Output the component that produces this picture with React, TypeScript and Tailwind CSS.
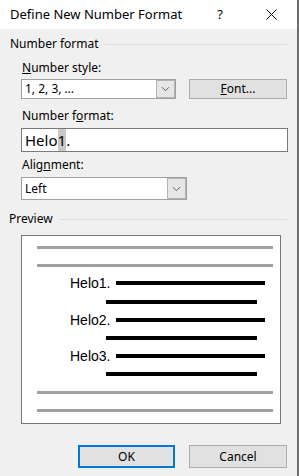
import React from 'react';

const ui = { fontFamily: '"Noto Sans", "Open Sans", Arial, sans-serif' };
const arial = { fontFamily: '"Liberation Sans", Arial, sans-serif' };

const Chevron: React.FC = () => (
  <svg width="9" height="6" viewBox="0 0 9 6" fill="none">
    <path d="M1 1.2 L4.5 4.7 L8 1.2" stroke="#606060" strokeWidth="1" />
  </svg>
);

const Dropdown: React.FC<{ value: string; width: string; height: string }> = ({ value, width, height }) => (
  <div className={`flex ${width} ${height} border border-[#a0a0a0] bg-white`}>
    <div className="flex flex-1 items-center pl-[3px] text-[12px] text-black">{value}</div>
    <div className="flex w-[19px] items-center justify-center border border-[#b4b4b4] bg-[#e6e6e6]">
      <Chevron />
    </div>
  </div>
);

const GroupHeader: React.FC<{ label: string }> = ({ label }) => (
  <div className="flex h-[16px] items-center pl-[10px] pr-[10px]">
    <span className="text-[12px] text-black">{label}</span>
    <div className="ml-[6px] h-px flex-1 bg-[#dcdcdc]" />
  </div>
);

const Label: React.FC<{ children: React.ReactNode; mt: string }> = ({ children, mt }) => (
  <div className={`flex h-[16px] items-center pl-[22px] text-[12px] text-black ${mt}`}>{children}</div>
);

const Button: React.FC<{ children: React.ReactNode; primary?: boolean }> = ({ children, primary }) => (
  <div
    className={`flex h-[23px] w-[98px] items-center justify-center bg-[#e1e1e1] text-[12px] text-black ${
      primary ? 'border-2 border-[#0078d7]' : 'border border-[#adadad]'
    }`}
  >
    {children}
  </div>
);

const GrayLine: React.FC = () => (
  <div className="flex h-[18.2px] items-center pl-[15px]">
    <div className="h-[3px] w-[236px] bg-[#a0a0a0]" />
  </div>
);

const HeloRows: React.FC<{ n: number }> = ({ n }) => (
  <>
    <div className="flex h-[18.2px] items-center">
      <span className="ml-[48px] w-[46px] text-[14px] leading-none text-black" style={arial}>
        Helo{n}.
      </span>
      <div className="h-[4px] w-[149px] bg-black" />
    </div>
    <div className="flex h-[18.2px] items-center">
      <div className="ml-[84px] h-[4px] w-[151px] bg-black" />
    </div>
  </>
);

export default function App() {
  return (
    <div className="flex h-[476px] w-[299px] overflow-hidden bg-[#6e6e6e]" style={ui}>
      <div className="flex w-[297px] flex-col bg-[#f0f0f0]">
        <div className="flex h-[29px] items-center bg-white">
          <span className="pl-[10px] text-[13px] text-black">Define New Number Format</span>
          <span className="ml-auto mr-[43px] text-[13px] text-black">?</span>
          <svg className="mr-[20px]" width="11" height="11" viewBox="0 0 11 11">
            <path d="M0.5 0.5 L10.5 10.5 M10.5 0.5 L0.5 10.5" stroke="#000" strokeWidth="1" />
          </svg>
        </div>

        <div className="mt-[7px]">
          <GroupHeader label="Number format" />
        </div>

        <Label mt="mt-[8px]">
          <span className="underline">N</span>umber style:
        </Label>
        <div className="mt-[3px] flex pl-[21px]">
          <Dropdown value="1, 2, 3, …" width="w-[155px]" height="h-[20px]" />
          <div className="ml-[13px] h-[20px]">
            <div className="flex h-[20px] w-[98px] items-center justify-center border border-[#adadad] bg-[#e1e1e1] text-[12px] text-black">
              <span className="underline">F</span>ont...
            </div>
          </div>
        </div>

        <Label mt="mt-[9px]">
          Number f<span className="underline">o</span>rmat:
        </Label>
        <div className="mt-[4px] pl-[21px]">
          <div className="flex h-[24px] w-[267px] items-center border border-[#7a7a7a] bg-white pl-[3px] text-[15px] text-black">
            Helo<span className="bg-[#c8c8c8]">1</span>.
          </div>
        </div>

        <Label mt="mt-[5px]">
          Alig<span className="underline">n</span>ment:
        </Label>
        <div className="mt-[4px] pl-[21px]">
          <Dropdown value="Left" width="w-[166px]" height="h-[23px]" />
        </div>

        <div className="mt-[11px]">
          <div className="flex h-[16px] items-center pl-[9px] pr-[10px]">
            <span className="text-[12px] text-black">Preview</span>
            <div className="ml-[7px] h-px flex-1 bg-[#dcdcdc]" />
          </div>
        </div>

        <div className="mt-[8px] pl-[21px]">
          <div className="flex h-[189px] w-[260px] flex-col border border-[#767676] bg-white pt-[2px]">
            <GrayLine />
            <GrayLine />
            <HeloRows n={1} />
            <HeloRows n={2} />
            <HeloRows n={3} />
            <GrayLine />
            <GrayLine />
          </div>
        </div>

        <div className="mt-[21px] flex pl-[78px]">
          <div className="w-[97px]">
            <div className="flex h-[23px] w-[97px] items-center justify-center border-2 border-[#0078d7] bg-[#e1e1e1] text-[12px] text-black">
              OK
            </div>
          </div>
          <div className="ml-[14px]">
            <Button>Cancel</Button>
          </div>
        </div>
      </div>
      <div className="w-[2px]" />
    </div>
  );
}
